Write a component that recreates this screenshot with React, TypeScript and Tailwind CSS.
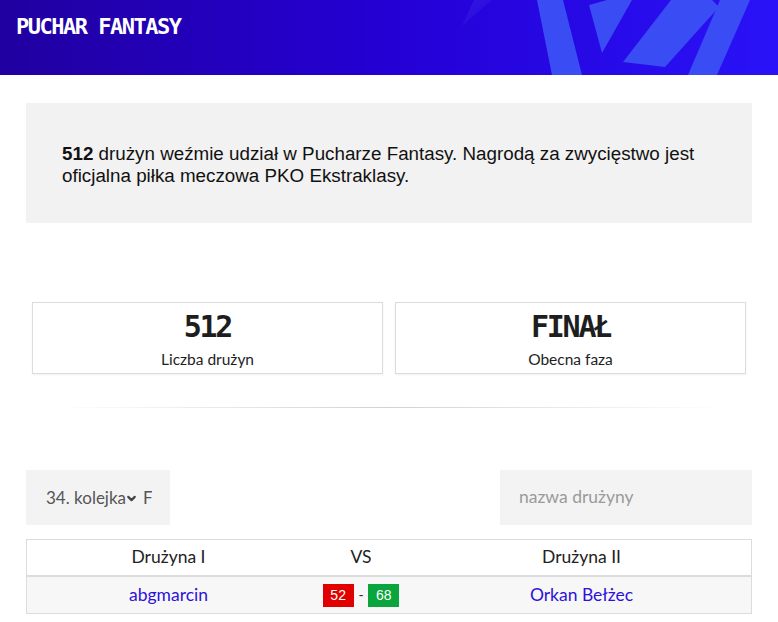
import { ChevronDown } from "lucide-react";

const mono = "font-['DejaVu_Sans_Mono',monospace]";
const body = "font-['Lato','Open_Sans',sans-serif]";

function HeaderArt() {
  return (
    <svg className="absolute inset-0 h-full w-full" viewBox="0 0 778 75" preserveAspectRatio="none">
      <defs>
        <linearGradient id="glow" x1="0" y1="0" x2="1" y2="1">
          <stop offset="0" stopColor="#6c7bff" stopOpacity="0.18" />
          <stop offset="1" stopColor="#6c7bff" stopOpacity="0" />
        </linearGradient>
      </defs>
      <polygon points="462,26 474,0 492,0" fill="url(#glow)" />
      <polygon points="537,0 563,0 582,75 552,75" fill="#3a4cf3" />
      <polygon points="589,5 607,0 632,0 602,53" fill="#3a4cf3" />
      <polygon points="623,62 671,0 712,0 719,7 665,67" fill="#3a4cf3" />
      <polygon points="720,0 750,0 717,75 688,75" fill="#3a4cf3" />
    </svg>
  );
}

function StatCard({ value, label }: { value: string; label: string }) {
  return (
    <div className="flex h-[72px] flex-col items-center border border-[#dcdcdc] bg-white pt-[8px] shadow-[0_1px_2px_rgba(0,0,0,0.06)]">
      <div className={`${mono} text-[30px] font-bold leading-[32px] tracking-[-2.3px] text-[#1e1e1e]`}>{value}</div>
      <div className={`${body} mt-[6px] text-[15.5px] leading-[20px] text-[#1e1e1e]`}>{label}</div>
    </div>
  );
}

export default function App() {
  return (
    <div className="w-[778px] bg-white pb-2">
      <header className="relative h-[75px] overflow-hidden bg-gradient-to-r from-[#2100a0] via-[#2400d4] to-[#2a12f8]">
        <HeaderArt />
        <h1 className={`${mono} relative pl-4 pt-[14px] text-[22px] font-bold leading-[26px] tracking-[-1.5px] text-white`}>
          PUCHAR FANTASY
        </h1>
      </header>

      <div className="px-[26px] pt-[28px]">
        <div className="h-[120px] bg-[#f2f2f2] px-[36px] pt-[40px] font-['Liberation_Sans',Arial,sans-serif] text-[18.8px] leading-[22px] text-[#111]">
          <b>512</b> drużyn weźmie udział w Pucharze Fantasy. Nagrodą za zwycięstwo jest oficjalna piłka meczowa PKO Ekstraklasy.
        </div>
      </div>

      <div className="mt-[79px] grid grid-cols-2 gap-3 px-8">
        <StatCard value="512" label="Liczba drużyn" />
        <StatCard value="FINAŁ" label="Obecna faza" />
      </div>

      <div className="mx-[55px] mt-[33px] h-px bg-gradient-to-r from-transparent via-[#d2d2d2] to-transparent" />

      <div className={`${body} px-[26px]`}>
        <div className="mt-[62px] flex justify-between">
          <div className="flex h-[55px] w-[144px] items-center bg-[#f3f3f3] pl-5 text-[17px] text-[#555]">
            <div className="flex w-[106px] items-center overflow-hidden whitespace-nowrap">
              <span>34. kolejka</span>
              <ChevronDown className="-ml-[1px] mt-[2px] h-[13px] w-[13px] shrink-0 text-[#444]" strokeWidth={4} />
              <span className="ml-[5px]">Finał</span>
            </div>
          </div>
          <div className="flex h-[55px] w-[252px] items-center bg-[#f3f3f3] pl-[19px] text-[17.5px] text-[#9a9a9a]">nazwa drużyny</div>
        </div>

        <div className="mt-[14px] border border-[#dcdcdc] text-[17.5px]">
          <div className="grid h-[37px] grid-cols-[283px_102px_1fr] items-center border-b-2 border-[#dcdcdc] bg-white text-center text-[#222]">
            <div>Drużyna I</div>
            <div>VS</div>
            <div>Drużyna II</div>
          </div>
          <div className="grid h-[36px] grid-cols-[283px_102px_1fr] items-center bg-[#f7f7f7] text-center">
            <div className="text-[#2d12d8]">abgmarcin</div>
            <div className="flex items-center justify-center gap-[5px] font-['Liberation_Sans',Arial,sans-serif] text-[14px]">
              <span className="flex h-[23px] w-[31px] items-center justify-center bg-[#e00000] text-white">52</span>
              <span className="text-[#333]">-</span>
              <span className="flex h-[23px] w-[31px] items-center justify-center bg-[#0aa53c] text-white">68</span>
            </div>
            <div className="text-[#2d12d8]">Orkan Bełżec</div>
          </div>
        </div>
      </div>
    </div>
  );
}
